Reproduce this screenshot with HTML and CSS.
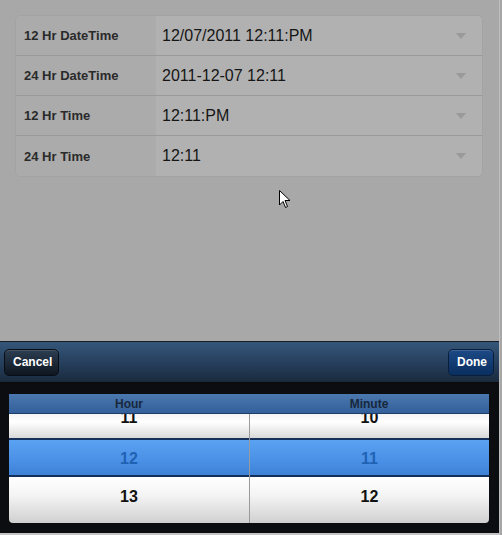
FILE: index.html
```html
<!DOCTYPE html>
<html>
<head>
<meta charset="utf-8">
<link rel="stylesheet" href="styles.css">
</head>
<body>
<div class="screen">
  <div class="page">
    <div class="form">
      <div class="row">
        <div class="label">12 Hr DateTime</div>
        <div class="value"><span>12/07/2011 12:11:PM</span><i class="arrow"></i></div>
      </div>
      <div class="row">
        <div class="label">24 Hr DateTime</div>
        <div class="value"><span>2011-12-07 12:11</span><i class="arrow"></i></div>
      </div>
      <div class="row">
        <div class="label">12 Hr Time</div>
        <div class="value"><span>12:11:PM</span><i class="arrow"></i></div>
      </div>
      <div class="row last">
        <div class="label">24 Hr Time</div>
        <div class="value"><span>12:11</span><i class="arrow"></i></div>
      </div>
    </div>
    <svg class="cursor" width="12" height="19" viewBox="0 0 12 19"><path d="M0.5 0.5 L0.5 15 L4 11.5 L6.5 17.5 L8.5 16.5 L6 10.5 L11 10.5 Z" fill="#fff" stroke="#000" stroke-width="1"/></svg>
  </div>
  <div class="panel">
    <div class="toolbar">
      <button class="btn cancel">Cancel</button>
      <button class="btn done">Done</button>
    </div>
    <div class="picker-area">
      <div class="picker">
        <div class="col">
          <div class="col-head">Hour</div>
          <div class="wheel">
            <div class="item prev">11</div>
            <div class="item sel">12</div>
            <div class="item next">13</div>
          </div>
        </div>
        <div class="col right">
          <div class="col-head">Minute</div>
          <div class="wheel">
            <div class="item prev">10</div>
            <div class="item sel">11</div>
            <div class="item next">12</div>
          </div>
        </div>
      </div>
    </div>
  </div>
</div>
</body>
</html>
```
FILE: styles.css
```css
html, body {
  margin: 0;
  padding: 0;
  height: 535px;
  overflow: hidden;
  background: #a6a6a6;
  font-family: "Liberation Sans", Arial, sans-serif;
}
.screen {
  width: 499px;
  height: 533px;
  border-right: 1px solid #bdbdbd;
  border-bottom: 2px solid #c4c4c4;
  display: flex;
  flex-direction: column;
  background: #a8a8a8;
}
.page {
  height: 341px;
  position: relative;
  padding: 15px 16px 0 15px;
  box-sizing: border-box;
}
.form {
  width: 468px;
  border-radius: 5px;
  background: #b1b1b1;
  border: 1px solid #a3a3a3;
  box-sizing: border-box;
  overflow: hidden;
}
.row {
  display: flex;
  height: 40px;
  box-sizing: border-box;
  border-bottom: 1px solid #9a9a9a;
}
.row.last {
  border-bottom: none;
}
.label {
  width: 140px;
  background: #ababab;
  font-weight: bold;
  font-size: 13px;
  color: #2a2a2a;
  padding-left: 8px;
  box-sizing: border-box;
  display: flex;
  align-items: center;
}
.value {
  flex: 1;
  display: flex;
  align-items: center;
  justify-content: space-between;
  padding: 0 16px 0 6px;
  font-size: 16px;
  color: #151515;
}
.arrow {
  width: 0;
  height: 0;
  border-left: 5px solid transparent;
  border-right: 5px solid transparent;
  border-top: 6px solid #999;
}
.cursor {
  position: absolute;
  left: 279px;
  top: 190px;
}
.panel {
  flex: 1;
  display: flex;
  flex-direction: column;
  border-top: 1px solid #161c24;
}
.toolbar {
  height: 40px;
  background: linear-gradient(#35567a, #243c58 60%, #1a2a3c);
  display: flex;
  justify-content: space-between;
  align-items: center;
  padding: 0 5px 0 4px;
}
.btn {
  font-family: "Liberation Sans", Arial, sans-serif;
  font-weight: bold;
  font-size: 12px;
  color: #fff;
  height: 27px;
  border-radius: 5px;
  padding: 0 8px;
  margin-top: 0;
}
.cancel {
  width: 55px;
  background: linear-gradient(#2c3e52, #0e1620);
  border: 1px solid #0a0e14;
  box-shadow: inset 0 1px 0 rgba(255,255,255,0.12);
}
.done {
  width: 46px;
  background: linear-gradient(#1c4a86, #0a2e60);
  border: 1px solid #0a1e3c;
  box-shadow: inset 0 1px 0 rgba(255,255,255,0.15);
}
.picker-area {
  flex: 1;
  background: #0b0d10;
  border-top: 1px solid #0a0a0a;
  padding: 11px 11px 0 9px;
}
.picker {
  width: 480px;
  height: 129px;
  display: flex;
  border-radius: 0 0 4px 4px;
  overflow: hidden;
}
.col {
  width: 240px;
  display: flex;
  flex-direction: column;
}
.col.right .wheel {
  border-left: 1px solid #9a9a9a;
}
.col-head {
  height: 20px;
  background: linear-gradient(#4b78ae, #33609a);
  border-bottom: 1px solid #1e3e68;
  box-sizing: border-box;
  text-align: center;
  font-weight: bold;
  font-size: 12px;
  line-height: 21px;
  color: #18283c;
  position: relative;
  z-index: 1;
}
.wheel {
  flex: 1;
  overflow: hidden;
  position: relative;
  font-weight: bold;
  font-size: 16px;
  color: #111;
  text-align: center;
}
.item {
  height: 40px;
  line-height: 40px;
}
.prev {
  margin-top: -16px;
  background: linear-gradient(#e0e0e0, #ffffff 60%, #d8d8d8);
  height: 40px;
}
.sel {
  height: 39px;
  line-height: 37px;
  box-sizing: border-box;
  border-top: 2px solid #14305a;
  border-bottom: 2px solid #14305a;
  background: linear-gradient(#5aa2f2, #4a90e6 60%, #3e82d6);
  color: #1f62b4;
}
.next {
  height: 46px;
  line-height: 40px;
  background: linear-gradient(#ffffff, #f4f4f4 40%, #d0d0d0);
}
```
